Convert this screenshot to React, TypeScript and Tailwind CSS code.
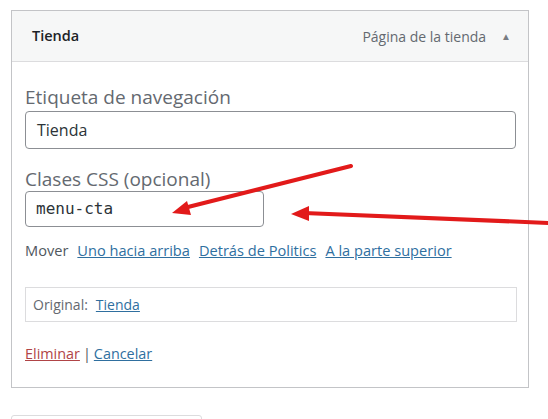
import React from "react";

const sans = { fontFamily: '"Open Sans", "Noto Sans", Arial, sans-serif' };

function Arrows() {
  return (
    <svg
      className="pointer-events-none absolute left-0 top-0"
      width={548}
      height={419}
      viewBox="0 0 548 419"
    >
      <line x1="351" y1="166" x2="184" y2="208" stroke="#e21a1a" strokeWidth="4" strokeLinecap="round" />
      <polygon points="172,213 187,201 191,215" fill="#e21a1a" />
      <line x1="550" y1="223" x2="304" y2="213" stroke="#e21a1a" strokeWidth="4" />
      <polygon points="291,214 309,206 309,221" fill="#e21a1a" />
    </svg>
  );
}

export default function App() {
  return (
    <div className="relative h-[419px] w-[548px] overflow-hidden bg-white" style={sans}>
      <div className="ml-[11px] mt-[10px] w-[518px] border border-[#c3c4c7] bg-white">
        <div className="flex h-[51px] items-center border-b border-[#dcdcde] bg-[#f6f7f7] pl-[20px] pr-[17px]">
          <span className="text-[14.5px] font-semibold text-[#1d2327]">Tienda</span>
          <span className="ml-auto text-[14px] text-[#646970]">Página de la tienda</span>
          <span className="ml-[15px] text-[10px] text-[#787c82]">▲</span>
        </div>

        <div className="px-[13px] pb-[22px] pt-[22px]">
          <div className="text-[19px] leading-[26px] text-[#646970]">Etiqueta de navegación</div>
          <div className="mt-[1px] flex h-[38px] w-[491px] items-center rounded-[4px] border border-[#8c8f94] px-[11px] text-[16px] text-[#2c3338]">
            Tienda
          </div>

          <div className="mt-[17px] text-[19px] leading-[26px] text-[#646970]">Clases CSS (opcional)</div>
          <div
            className="mt-[-1px] flex h-[36px] w-[239px] items-center rounded-[4px] border border-[#8c8f94] px-[10px] text-[16px] text-[#2c3338]"
            style={{ fontFamily: '"DejaVu Sans Mono", "Liberation Mono", monospace' }}
          >
            menu-cta
          </div>

          <div className="mt-[13px] flex items-center gap-[9px] text-[14.6px] text-[#50575e]">
            <span>Mover</span>
            <a className="text-[#2f6f9f] underline">Uno hacia arriba</a>
            <a className="text-[#2f6f9f] underline">Detrás de Politics</a>
            <a className="text-[#2f6f9f] underline">A la parte superior</a>
          </div>

          <div className="mt-[25px] flex h-[35px] w-[492px] items-center border border-[#dcdcde] px-[7px] text-[14px] text-[#646970]">
            <span>Original:</span>
            <a className="ml-[8px] text-[#2f6f9f] underline">Tienda</a>
          </div>

          <div className="mt-[21px] text-[14.4px] text-[#50575e]">
            <a className="text-[#b04446] underline">Eliminar</a>
            <span className="mx-[3px]">|</span>
            <a className="text-[#2f6f9f] underline">Cancelar</a>
          </div>
        </div>
      </div>

      <div className="ml-[11px] mt-[27px] h-[30px] w-[191px] rounded-t-[3px] border border-[#dcdcde] bg-white" />

      <Arrows />
    </div>
  );
}
